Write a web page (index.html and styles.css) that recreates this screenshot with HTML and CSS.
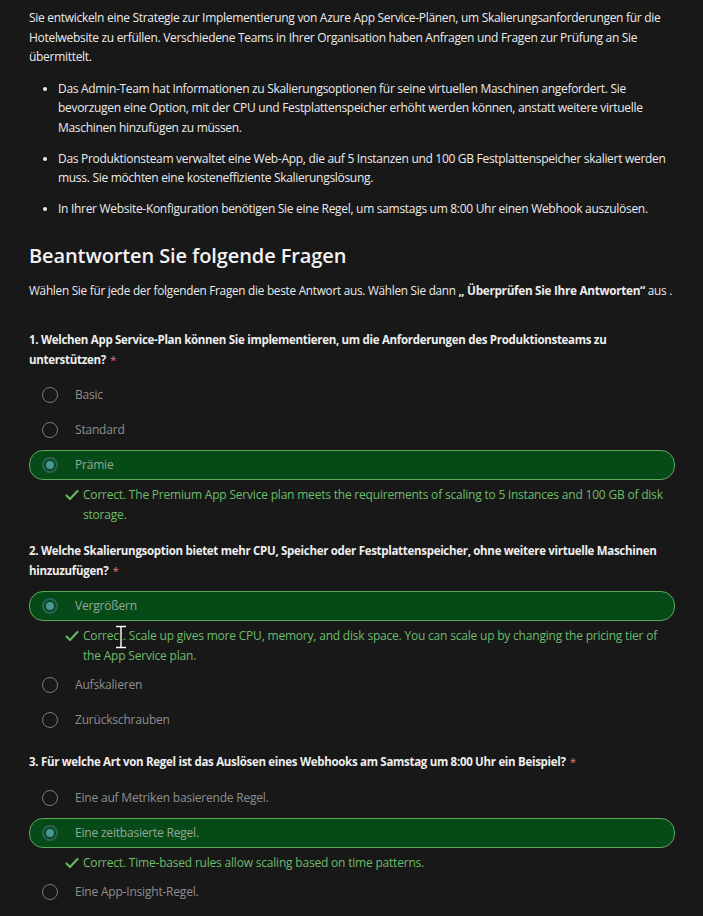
FILE: index.html
```html
<!DOCTYPE html>
<html lang="de">
<head>
<meta charset="utf-8">
<title>Beantworten Sie folgende Fragen</title>
<link rel="stylesheet" href="styles.css">
</head>
<body>
<main class="page">
  <p class="intro">Sie entwickeln eine Strategie zur Implementierung von Azure App Service-Plänen, um Skalierungsanforderungen für die Hotelwebsite zu erfüllen. Verschiedene Teams in Ihrer Organisation haben Anfragen und Fragen zur Prüfung an Sie übermittelt.</p>
  <ul class="bullets">
    <li>Das Admin-Team hat Informationen zu Skalierungsoptionen für seine virtuellen Maschinen angefordert. Sie bevorzugen eine Option, mit der CPU und Festplattenspeicher erhöht werden können, anstatt weitere virtuelle Maschinen hinzufügen zu müssen.</li>
    <li>Das Produktionsteam verwaltet eine Web-App, die auf 5 Instanzen und 100 GB Festplattenspeicher skaliert werden muss. Sie möchten eine kosteneffiziente Skalierungslösung.</li>
    <li>In Ihrer Website-Konfiguration benötigen Sie eine Regel, um samstags um 8:00 Uhr einen Webhook auszulösen.</li>
  </ul>

  <h2 class="title">Beantworten Sie folgende Fragen</h2>
  <p class="lead">Wählen Sie für jede der folgenden Fragen die beste Antwort aus. Wählen Sie dann <strong>„ Überprüfen Sie Ihre Antworten“</strong> aus .</p>

  <section class="question q1">
    <h3 class="q-title">1. Welchen App Service-Plan können Sie implementieren, um die Anforderungen des Produktionsteams zu unterstützen?<span class="req">*</span></h3>
    <div class="options">
      <div class="option"><span class="radio"></span><span class="label">Basic</span></div>
      <div class="option"><span class="radio"></span><span class="label">Standard</span></div>
      <div class="option selected"><span class="radio"></span><span class="label">Prämie</span></div>
      <div class="feedback"><svg class="check" viewBox="0 0 14 12" width="14" height="12"><path d="M1.5 6.5 L5 10 L12.5 2" fill="none" stroke="#5fb65f" stroke-width="2.2" stroke-linecap="round" stroke-linejoin="round"/></svg><span>Correct. The Premium App Service plan meets the requirements of scaling to 5 instances and 100 GB of disk storage.</span></div>
    </div>
  </section>

  <section class="question">
    <h3 class="q-title">2. Welche Skalierungsoption bietet mehr CPU, Speicher oder Festplattenspeicher, ohne weitere virtuelle Maschinen hinzuzufügen?<span class="req">*</span></h3>
    <div class="options">
      <div class="option selected"><span class="radio"></span><span class="label">Vergrößern</span></div>
      <div class="feedback"><svg class="check" viewBox="0 0 14 12" width="14" height="12"><path d="M1.5 6.5 L5 10 L12.5 2" fill="none" stroke="#5fb65f" stroke-width="2.2" stroke-linecap="round" stroke-linejoin="round"/></svg><span>Correct. Scale up gives more CPU, memory, and disk space. You can scale up by changing the pricing tier of the App Service plan.</span><svg class="ibeam" viewBox="0 0 12 24" width="12" height="24"><path d="M1 1.5 H11 M1 22.5 H11 M6 1.5 V22.5" fill="none" stroke="#111" stroke-width="3"/><path d="M1 1.5 H11 M1 22.5 H11 M6 1.5 V22.5" fill="none" stroke="#fff" stroke-width="1.4"/></svg></div>
      <div class="option"><span class="radio"></span><span class="label">Aufskalieren</span></div>
      <div class="option"><span class="radio"></span><span class="label">Zurückschrauben</span></div>
    </div>
  </section>

  <section class="question">
    <h3 class="q-title">3. Für welche Art von Regel ist das Auslösen eines Webhooks am Samstag um 8:00 Uhr ein Beispiel?<span class="req">*</span></h3>
    <div class="options">
      <div class="option"><span class="radio"></span><span class="label">Eine auf Metriken basierende Regel.</span></div>
      <div class="option selected"><span class="radio"></span><span class="label">Eine zeitbasierte Regel.</span></div>
      <div class="feedback"><svg class="check" viewBox="0 0 14 12" width="14" height="12"><path d="M1.5 6.5 L5 10 L12.5 2" fill="none" stroke="#5fb65f" stroke-width="2.2" stroke-linecap="round" stroke-linejoin="round"/></svg><span>Correct. Time-based rules allow scaling based on time patterns.</span></div>
      <div class="option"><span class="radio"></span><span class="label">Eine App-Insight-Regel.</span></div>
    </div>
  </section>
</main>
</body>
</html>
```

FILE: styles.css
```css
html, body {
  margin: 0;
  padding: 0;
  background: #181818;
}

body {
  font-family: "Open Sans", "Noto Sans", "Liberation Sans", sans-serif;
  font-size: 12px;
  line-height: 19.5px;
  letter-spacing: -0.3px;
  color: #ebebeb;
}

.page {
  padding: 8px 28px 0 29px;
}

.intro {
  margin: 0;
}

.bullets {
  margin: 12px 0 0;
  padding-left: 29px;
}

.bullets li {
  margin-bottom: 11.5px;
}

.bullets li::marker {
  font-size: 11px;
}

.title {
  margin: 24px 0 0;
  font-size: 20px;
  line-height: 26px;
  font-weight: 600;
  letter-spacing: -0.1px;
  color: #f2f2f2;
}

.lead {
  margin: 12px 0 0;
  font-size: 11.75px;
  letter-spacing: -0.25px;
}

.lead strong {
  font-weight: 700;
  letter-spacing: -0.3px;
}

.question {
  margin-top: 17px;
}

.question.q1 {
  margin-top: 30px;
}

.q-title {
  margin: 0;
  font-size: 11.5px;
  line-height: 19.5px;
  font-weight: 700;
  letter-spacing: -0.3px;
  color: #eeeeee;
}

.req {
  display: inline-block;
  margin-left: 4px;
  color: #e07a7a;
  font-weight: 400;
  letter-spacing: 0;
}

.options {
  margin-top: 11px;
  display: flex;
  flex-direction: column;
  gap: 5px;
}

.option {
  height: 30px;
  box-sizing: border-box;
  display: flex;
  align-items: center;
  gap: 17px;
  padding-left: 12px;
  border: 1px solid transparent;
  border-radius: 14px;
  letter-spacing: -0.2px;
  color: #8e8e8e;
}

.option.selected {
  background: #054a17;
  border-color: #5ea85e;
  color: #97a897;
}

.radio {
  width: 16px;
  height: 16px;
  box-sizing: border-box;
  border: 1.5px solid #7a7a7a;
  border-radius: 50%;
  display: flex;
  align-items: center;
  justify-content: center;
  flex: none;
}

.option.selected .radio {
  border: 2px solid #2e5f5a;
}

.option.selected .radio::after {
  content: "";
  width: 8px;
  height: 8px;
  border-radius: 50%;
  background: #4a9796;
}

.feedback {
  position: relative;
  display: flex;
  align-items: flex-start;
  gap: 4px;
  padding-left: 36px;
  padding-right: 8px;
  letter-spacing: -0.2px;
  color: #6cbd6c;
}

.check {
  flex: none;
  margin-top: 4px;
}

.ibeam {
  position: absolute;
  left: 86px;
  top: -1px;
}
```
